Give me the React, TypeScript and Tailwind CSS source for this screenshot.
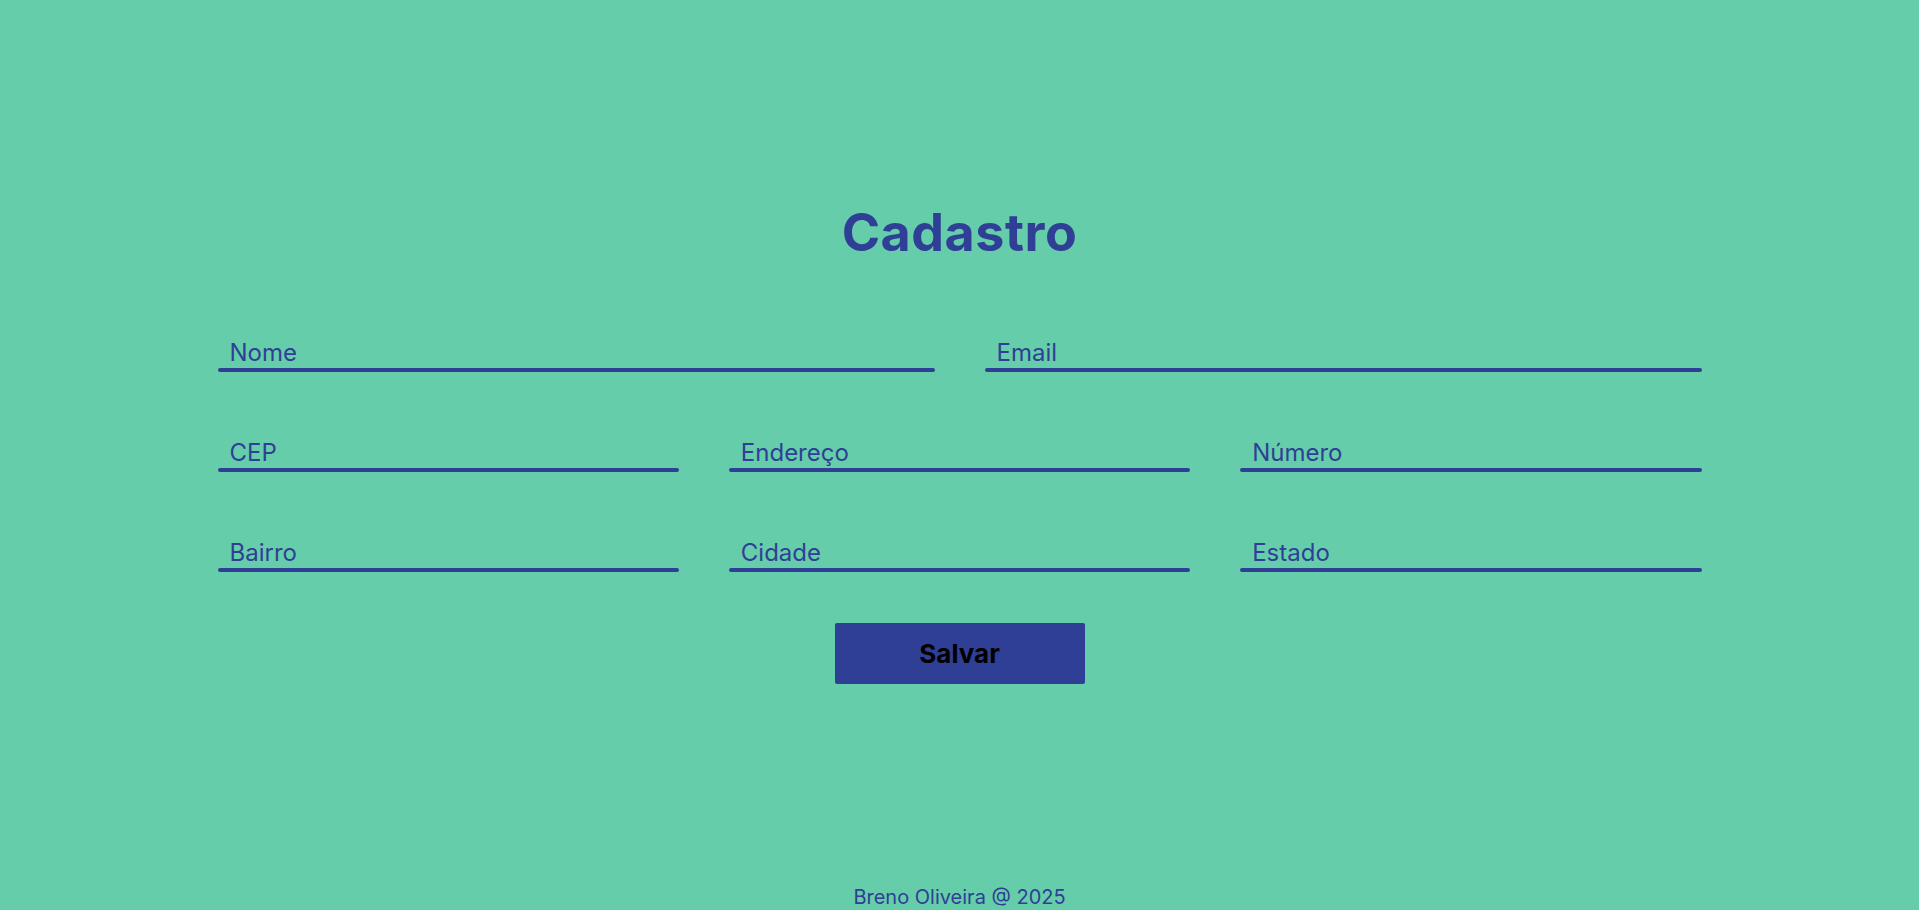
import React from "react"

const font = { fontFamily: '"Inter", "Liberation Sans", sans-serif' }

function Field({ label }: { label: string }) {
  return (
    <div className="flex flex-col">
      <input
        type="text"
        placeholder={label}
        className="h-[32px] w-full bg-transparent pl-3 text-[24px] leading-none text-[#2f3f96] placeholder:text-[#2f3f96] outline-none"
      />
      <div className="h-1 w-full rounded-full bg-[#2f3f96]" />
    </div>
  )
}

export default function App() {
  const rows = [
    ["Nome", "Email"],
    ["CEP", "Endereço", "Número"],
    ["Bairro", "Cidade", "Estado"],
  ]

  return (
    <div className="flex min-h-screen flex-col bg-[#66cdaa]" style={font}>
      <main className="flex flex-1 flex-col items-center pt-[207px]">
        <h1 className="text-[52px] font-bold leading-none tracking-[0.01em] text-[#2f3f96]">Cadastro</h1>

        <form className="mt-[77px] flex w-[1484px] flex-col gap-[64px]" onSubmit={(e) => e.preventDefault()}>
          {rows.map((row, i) => (
            <div key={i} className={row.length === 2 ? "grid grid-cols-2 gap-x-[50px]" : "grid grid-cols-3 gap-x-[50px]"}>
              {row.map((label) => (
                <Field key={label} label={label} />
              ))}
            </div>
          ))}
        </form>

        <button
          type="button"
          className="mt-[51px] h-[61px] w-[250px] rounded-[2px] bg-[#2f3f96] text-[26px] font-bold text-black"
        >
          Salvar
        </button>
      </main>

      <footer className="pb-[3px] text-center text-[20px] leading-[20px] text-[#2f3f96]">Breno Oliveira @ 2025</footer>
    </div>
  )
}
